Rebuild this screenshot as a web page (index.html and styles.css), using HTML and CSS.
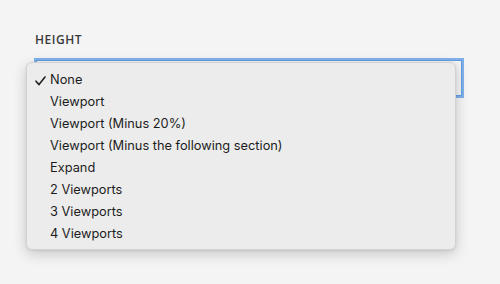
FILE: index.html
```html
<!DOCTYPE html>
<html>
<head>
<meta charset="utf-8">
<link rel="stylesheet" href="styles.css">
</head>
<body>
<div class="field">
  <div class="label">HEIGHT</div>
  <div class="select-wrap">
    <div class="select"></div>
    <ul class="menu">
      <li class="item checked"><svg class="check" width="11" height="10" viewBox="0 0 11 10"><path d="M1 5.2 L4 8.6 L10 1" fill="none" stroke="#222" stroke-width="1.6" stroke-linecap="round" stroke-linejoin="round"/></svg>None</li>
      <li class="item">Viewport</li>
      <li class="item">Viewport (Minus 20%)</li>
      <li class="item">Viewport (Minus the following section)</li>
      <li class="item">Expand</li>
      <li class="item">2 Viewports</li>
      <li class="item">3 Viewports</li>
      <li class="item">4 Viewports</li>
    </ul>
  </div>
</div>
</body>
</html>
```

FILE: styles.css
```css
html, body {
  margin: 0;
  padding: 0;
  background: #f4f4f4;
  width: 500px;
  height: 284px;
  overflow: hidden;
}
.field {
  padding: 33px 0 0 34px;
}
.label {
  font-family: "Open Sans", sans-serif;
  font-size: 12px;
  font-weight: 600;
  letter-spacing: 0.55px;
  color: #3a3a3a;
  line-height: 14px;
  padding-left: 1px;
}
.select-wrap {
  position: relative;
  margin-top: 11px;
  width: 430px;
}
.select {
  height: 36px;
  border: 2px solid #7fb1e9;
  box-shadow: inset 0 0 0 1px #5f9de2;
  background: #f3f3f3;
}
.menu {
  position: absolute;
  left: -8px;
  top: 4px;
  width: 428px;
  margin: 0;
  padding: 6px 0 4px;
  list-style: none;
  background: #ececec;
  border: 1px solid #d2d2d2;
  border-radius: 6px;
  box-shadow: 0 4px 14px rgba(0,0,0,0.18), 0 1px 3px rgba(0,0,0,0.08);
}
.item {
  position: relative;
  height: 22px;
  line-height: 22px;
  padding-left: 23px;
  font-family: "Inter", sans-serif;
  font-size: 12.8px;
  color: #1c1c1c;
}
.check {
  position: absolute;
  left: 8px;
  top: 7px;
}
```
